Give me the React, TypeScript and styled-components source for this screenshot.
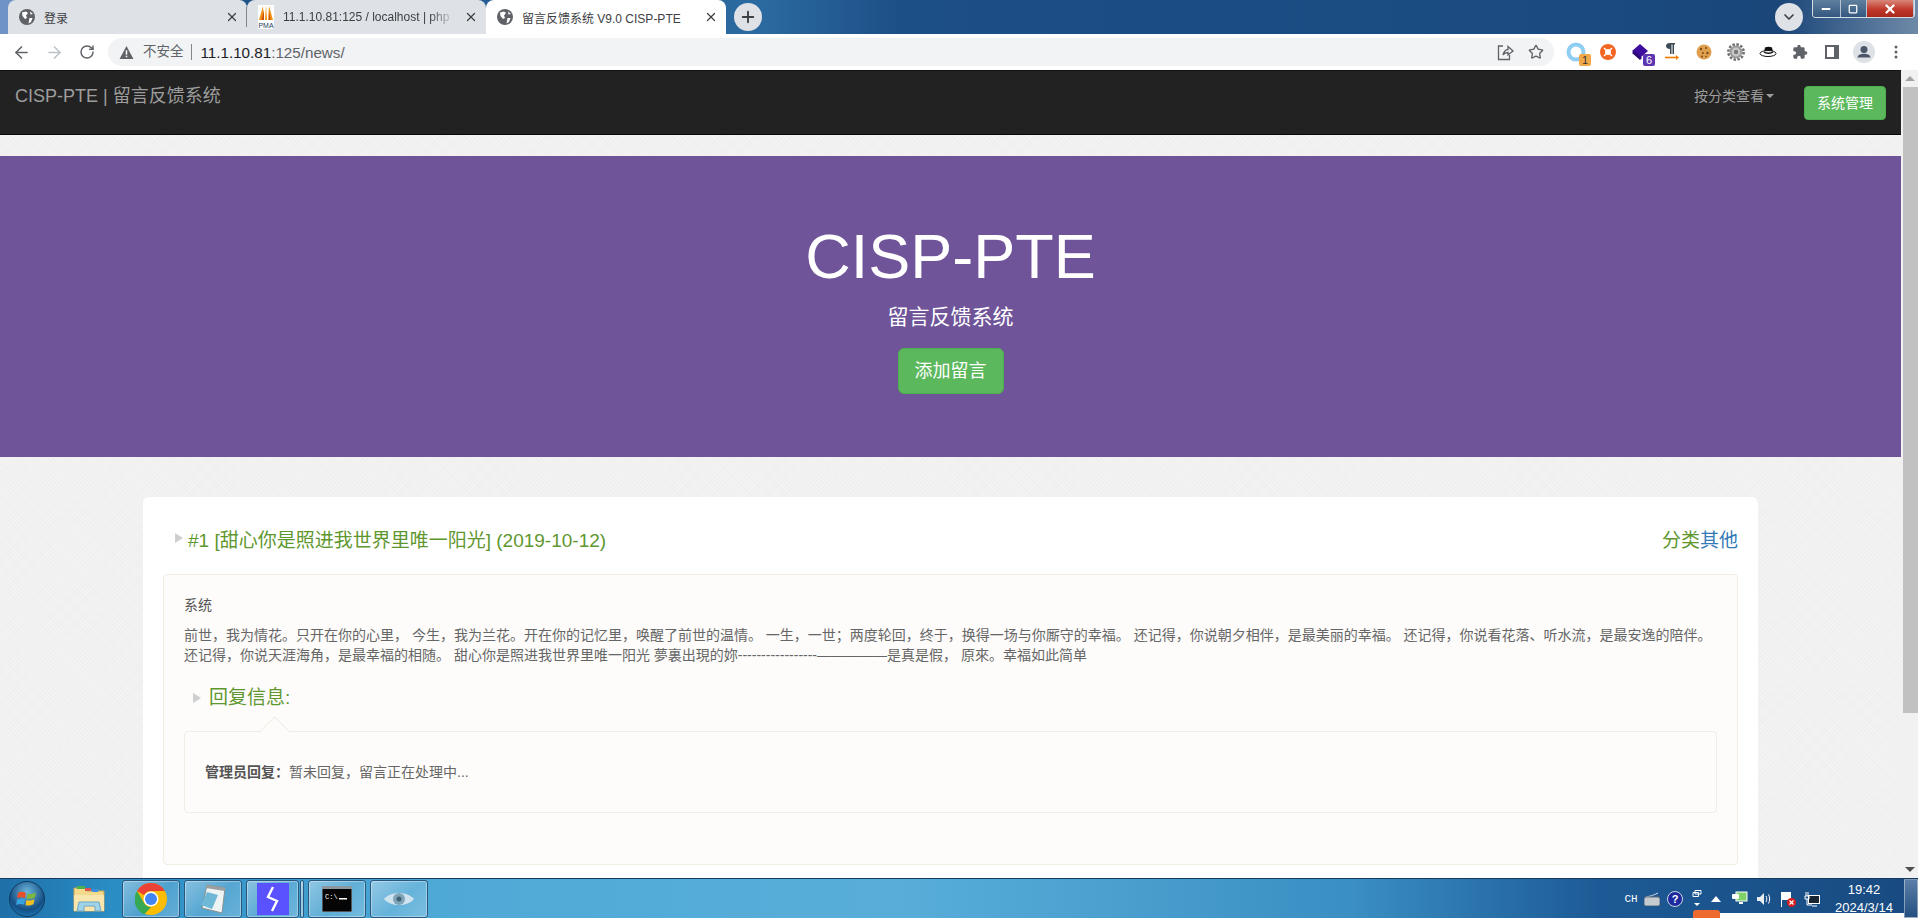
import React, { ReactElement } from 'react';
import styled, { createGlobalStyle } from 'styled-components';
import { ArrowLeft, ArrowRight, ChevronDown, Minus, Plus, RotateCw, Star, Square, X } from 'lucide-react';

const GlobalStyle = createGlobalStyle`
  html, body {
    margin: 0;
    padding: 0;
    height: 100%;
    overflow: hidden;
  }
  body {
    font-family: 'Liberation Sans', 'Noto Sans CJK SC', sans-serif;
    font-size: 14px;
    color: #333;
  }
  * {
    box-sizing: border-box;
  }
`;

const Page = styled.div`
  width: 1918px;
  height: 918px;
  display: flex;
  flex-direction: column;
  overflow: hidden;
`;

/* ---- browser chrome ---- */
const TabStrip = styled.div`
  height: 34px;
  flex: none;
  display: flex;
  align-items: stretch;
  padding-left: 8px;
  background: linear-gradient(90deg, #6f93c4 0, #6f93c4 8px, #1e5388 250px, #2b6aa0 760px, #1c4f86 900px, #1a4a80 1600px, #1a4679 1780px, #6f8aa8 1918px);
`;
const Tab = styled.div<{ $active?: boolean; $width: number }>`
  width: ${(p) => p.$width}px;
  display: flex;
  align-items: center;
  padding: 0 8px 0 11px;
  gap: 9px;
  font-size: 12px;
  color: #45474b;
  white-space: nowrap;
  border-radius: 8px 8px 0 0;
  background: ${(p) => (p.$active ? '#fff' : '#dee1e6')};
`;
const TabTitle = styled.span<{ $fade?: boolean }>`
  flex: 1;
  overflow: hidden;
  color: #3c4043;
  ${(p) => p.$fade && 'mask-image: linear-gradient(90deg, #000 85%, transparent);'}
`;
const TabClose = styled(X)`
  flex: none;
  color: #3c4043;
`;
const TabSeparator = styled.div`
  width: 1px;
  background: #80868b;
  margin: 7px 0;
  position: relative;
  z-index: 1;
  margin-left: -1px;
`;
const NewTab = styled.div`
  width: 28px;
  height: 28px;
  margin: 3px 0 0 8px;
  border-radius: 50%;
  background: #dee1e6;
  display: flex;
  align-items: center;
  justify-content: center;
  color: #3c4043;
`;
const StripFill = styled.div`
  flex: 1;
`;
const TabSearch = styled.div`
  width: 28px;
  height: 28px;
  margin: 3px 9px 0 0;
  border-radius: 50%;
  background: #dee1e6;
  display: flex;
  align-items: center;
  justify-content: center;
  color: #3c4043;
`;
const WindowControls = styled.div`
  width: 103px;
  height: 18px;
  margin-right: 3px;
  display: flex;
  border: 1px solid #d5dde6;
  border-top: 0;
  border-radius: 0 0 4px 4px;
  overflow: hidden;
`;
const WindowButton = styled.div<{ $close?: boolean; $grow?: number }>`
  flex: ${(p) => p.$grow ?? 1};
  display: flex;
  align-items: center;
  justify-content: center;
  color: #fff;
  border-right: 1px solid #b6c4d3;
  background: ${(p) => (p.$close ? 'linear-gradient(#d9877a, #c0392b 55%, #a8281c)' : 'linear-gradient(#5f7f9e, #33587f)')};
`;

const Toolbar = styled.div`
  height: 36px;
  flex: none;
  display: flex;
  align-items: center;
  background: #fff;
  padding: 0 6px 0 6px;
`;
const NavButton = styled.div<{ $width: number; $off?: boolean }>`
  width: ${(p) => p.$width}px;
  display: flex;
  justify-content: center;
  color: ${(p) => (p.$off ? '#bdc1c6' : '#5f6368')};
`;
const Omnibox = styled.div`
  flex: 1;
  height: 28px;
  margin: 0 6px 0 6px;
  padding: 0 10px 0 11px;
  display: flex;
  align-items: center;
  border-radius: 14px;
  background: #f1f3f4;
  font-size: 13px;
  color: #5f6368;
`;
const NotSecure = styled.span`
  margin-left: 9px;
  font-size: 13.5px;
  padding-right: 7px;
  border-right: 1px solid #80868b;
  line-height: 16px;
`;
const Url = styled.span`
  margin-left: 9px;
  font-size: 15.2px;
  color: #5f6368;
  flex: 1;
  b {
    font-weight: normal;
    color: #202124;
  }
`;
const OmniIcon = styled.span<{ $gap: number }>`
  display: flex;
  margin-left: ${(p) => p.$gap}px;
  color: #5f6368;
`;
const Extensions = styled.div`
  display: flex;
`;
const Extension = styled.div`
  width: 32px;
  height: 28px;
  display: flex;
  align-items: center;
  justify-content: center;
  position: relative;
`;
const ExtBadge = styled.span<{ $bg: string; $color: string }>`
  position: absolute;
  right: 1px;
  bottom: 0;
  width: 12px;
  height: 12px;
  border-radius: 2px;
  font-size: 11px;
  line-height: 12px;
  text-align: center;
  background: ${(p) => p.$bg};
  color: ${(p) => p.$color};
`;

/* ---- page area ---- */
const Body = styled.div`
  flex: 1;
  min-height: 0;
  display: flex;
`;
const Viewport = styled.div`
  flex: 1;
  min-width: 0;
  overflow: hidden;
  background-color: #f3f3f3;
  background-image: repeating-linear-gradient(45deg, rgba(0, 0, 0, 0.012) 0 1px, transparent 1px 3px),
    repeating-linear-gradient(-45deg, rgba(0, 0, 0, 0.012) 0 1px, transparent 1px 3px);
`;
const Navbar = styled.nav`
  height: 65px;
  display: flex;
  align-items: flex-start;
  padding: 0 15px;
  background: #222;
  border-top: 1px solid #111;
  border-bottom: 1px solid #080808;
`;
const Brand = styled.a`
  font-size: 18px;
  line-height: 50px;
  color: #9d9d9d;
`;
const NavRight = styled.div`
  margin-left: auto;
  display: flex;
  align-items: flex-start;
`;
const NavLink = styled.a`
  display: flex;
  align-items: center;
  font-size: 14px;
  line-height: 50px;
  color: #9d9d9d;
  margin-right: 30px;
`;
const Caret = styled.span`
  width: 0;
  height: 0;
  margin-left: 2px;
  border-top: 4px solid #9d9d9d;
  border-left: 4px solid transparent;
  border-right: 4px solid transparent;
`;
const GreenButton = styled.a<{ $large?: boolean }>`
  display: inline-block;
  color: #fff;
  background: #5cb85c;
  border: 1px solid #4cae4c;
  border-radius: ${(p) => (p.$large ? 6 : 4)}px;
  font-size: ${(p) => (p.$large ? 18 : 14)}px;
  line-height: ${(p) => (p.$large ? 28 : 20)}px;
  padding: ${(p) => (p.$large ? '8px 16px' : '6px 12px')};
`;
const NavButtonGreen = styled(GreenButton)`
  margin-top: 15px;
  font-weight: 400;
`;
const Hero = styled.section`
  margin-top: 21px;
  height: 301px;
  padding-top: 60px;
  background: #6f5499;
  color: #fff;
  text-align: center;
`;
const HeroTitle = styled.h1`
  margin: 0;
  font-size: 63px;
  font-weight: 400;
  line-height: 80px;
`;
const HeroSubtitle = styled.p`
  margin: 0 0 10px;
  font-size: 21px;
  line-height: 42px;
`;

const Card = styled.article`
  margin: 40px 143px 0;
  padding: 22px 20px 0;
  height: 400px;
  background: #fff;
  border-radius: 6px 6px 0 0;
`;
const CardHead = styled.div`
  display: flex;
  align-items: center;
  justify-content: space-between;
  height: 38px;
  margin-bottom: 17px;
  font-size: 19px;
`;
const Heading = styled.h3<{ $indent: number; $gap: number }>`
  margin: 0;
  display: flex;
  align-items: center;
  gap: ${(p) => p.$gap}px;
  padding-left: ${(p) => p.$indent}px;
  font-size: 19px;
  font-weight: 400;
  color: #5f972f;
`;
const Arrow = styled.span`
  width: 0;
  height: 0;
  border-left: 8px solid #cfcfcf;
  border-top: 5px solid transparent;
  border-bottom: 5px solid transparent;
`;
const Category = styled.span`
  color: #5f972f;
  a {
    color: #337ab7;
  }
`;
const Inner = styled.div`
  height: 291px;
  padding: 20px 20px 0;
  background: #fdfcfa;
  border: 1px solid #f1ece4;
  border-radius: 4px;
  font-size: 14px;
  color: #666;
  line-height: 20px;
`;
const Author = styled.div`
  color: #555;
  margin-bottom: 10px;
`;
const Paragraph = styled.p`
  margin: 0;
  white-space: nowrap;
`;
const ReplyHead = styled(Heading)`
  margin-top: 20px;
  height: 26px;
`;
const ReplyBox = styled.div`
  position: relative;
  margin-top: 20px;
  height: 82px;
  padding: 30px 20px;
  background: #fdfcfa;
  border: 1px solid #f1ece4;
  border-radius: 4px;
  &::before {
    content: '';
    position: absolute;
    left: 78px;
    top: -11px;
    width: 22px;
    height: 22px;
    transform: rotate(45deg);
    background: #fdfcfa;
    border-left: 1px solid #f1ece4;
    border-top: 1px solid #f1ece4;
  }
  strong {
    color: #555;
  }
`;
const Scrollbar = styled.div`
  width: 17px;
  flex: none;
  display: flex;
  flex-direction: column;
  align-items: stretch;
  background: #f1f1f1;
`;
const ScrollEnd = styled.div`
  height: 17px;
  flex: none;
  display: flex;
  align-items: center;
  justify-content: center;
`;
const ScrollThumb = styled.div`
  height: 626px;
  margin-left: 2px;
  background: #c1c1c1;
`;
const ScrollGap = styled.div`
  flex: 1;
`;
const ScrollArrow = styled.span<{ $down?: boolean }>`
  width: 0;
  height: 0;
  border-left: 5px solid transparent;
  border-right: 5px solid transparent;
  ${(p) => (p.$down ? 'border-top: 5px solid #505050;' : 'border-bottom: 5px solid #a3a3a3;')}
`;

/* ---- windows taskbar ---- */
const Taskbar = styled.div`
  height: 40px;
  flex: none;
  display: flex;
  align-items: center;
  position: relative;
  border-top: 1px solid #15395f;
  color: #fff;
  background: linear-gradient(90deg, #1f6fa8 0, #2a8dc4 110px, #4fa9d6 440px, #58aed9 900px, #3a8fc3 1350px, #1d5a95 1600px, #184a80 1918px);
`;
const StartOrb = styled.div`
  width: 36px;
  height: 36px;
  margin: 0 15px 0 9px;
  border-radius: 50%;
  border: 1px solid #123a5c;
  display: flex;
  align-items: center;
  justify-content: center;
  background: radial-gradient(circle at 50% 30%, #6db7dc, #154f86 60%, #1f8fd0);
`;
const PinnedSlot = styled.div`
  width: 58px;
  height: 38px;
  margin-right: 4px;
  display: flex;
  align-items: center;
  justify-content: center;
`;
const TaskButton = styled.div<{ $width?: number; $gap?: number }>`
  width: ${(p) => p.$width ?? 58}px;
  height: 38px;
  margin-right: ${(p) => p.$gap ?? 4}px;
  display: flex;
  align-items: center;
  justify-content: center;
  border: 1px solid #28587e;
  border-radius: 3px;
  box-shadow: inset 0 0 0 1px rgba(255, 255, 255, 0.35);
  background: linear-gradient(135deg, rgba(255, 255, 255, 0.42), rgba(255, 255, 255, 0.15) 55%, rgba(255, 255, 255, 0.25));
`;
const Tray = styled.div`
  margin-left: auto;
  display: flex;
  align-items: center;
  height: 100%;
`;
const TrayItem = styled.div<{ $width: number }>`
  width: ${(p) => p.$width}px;
  display: flex;
  justify-content: center;
  align-items: center;
  font-family: 'Liberation Mono', monospace;
  font-size: 11px;
  svg {
    flex: none;
  }
`;
const Clock = styled.div`
  width: 80px;
  text-align: center;
  font-size: 13px;
  line-height: 18px;
`;
const ShowDesktop = styled.div`
  width: 14px;
  height: 100%;
  border: 1px solid rgba(255, 255, 255, 0.4);
  background: linear-gradient(#5a7ea6, #244f80);
`;
const TrayOverlay = styled.div`
  position: absolute;
  left: 1693px;
  right: 14px;
  bottom: 0;
  height: 5px;
  background: #fff;
`;
const OrangeChip = styled.div`
  position: absolute;
  left: 1693px;
  bottom: 0;
  width: 27px;
  height: 8px;
  background: #ee6a2e;
  border-radius: 3px 3px 0 0;
`;

function Globe(): ReactElement {
  return (
    <svg width="16" height="16" viewBox="0 0 16 16" style={{ flex: 'none' }}>
      <circle cx="8" cy="8" r="8" fill="#5f6368" />
      <path d="M3 3.5 7 2.5 9 4 7 6.5 8 9 6 10 3.5 7ZM10.5 9 13.5 9 12 13 9.5 14.5Z M11 2.5 14 5 11.5 5.5Z" fill="#fff" />
    </svg>
  );
}

function PmaIcon(): ReactElement {
  return (
    <svg width="16" height="24" viewBox="0 0 16 24" style={{ flex: 'none' }}>
      <rect width="16" height="24" fill="#fff" />
      <path d="M1 15 5 1 6 15ZM7 15 8 0 9 15ZM10 15 11 1 15 15Z" fill="#f29111" />
      <path d="M3.5 15 6 5 6 15ZM12.5 15 11 6 11 15Z" fill="#c8500f" />
      <text x="8" y="22.5" fontSize="7" textAnchor="middle" fill="#23415f" fontFamily="Liberation Sans">PMA</text>
    </svg>
  );
}

function Warning(): ReactElement {
  return (
    <svg width="15" height="15" viewBox="0 0 14 14" style={{ flex: 'none' }}>
      <path d="M7 1 13.5 13H.5Z" fill="#5f6368" />
      <rect x="6.3" y="5" width="1.4" height="4" fill="#fff" />
      <rect x="6.3" y="10" width="1.4" height="1.4" fill="#fff" />
    </svg>
  );
}

function ShareIcon(): ReactElement {
  return (
    <svg width="17" height="17" viewBox="0 0 17 17" fill="none" stroke="#5f6368" strokeWidth="1.3">
      <path d="M6 2H1.5V15.5H12.5V11" />
      <path d="M6 11C6.5 7.5 9 5.5 11 5.5V2.5L16 7 11 11V8.5C9 8.5 7 9.5 6 11Z" />
    </svg>
  );
}

function RingExt(): ReactElement {
  return (
    <svg width="20" height="20" viewBox="0 0 20 20" fill="none">
      <circle cx="10" cy="10" r="7.5" stroke="#8fcdf3" strokeWidth="4" />
    </svg>
  );
}

function LifeRing(): ReactElement {
  return (
    <svg width="16" height="16" viewBox="0 0 16 16" fill="none">
      <circle cx="8" cy="8" r="5.5" stroke="#f26522" strokeWidth="5" />
      <path d="M4 4 6 6M12 4 10 6M4 12 6 10M12 12 10 10" stroke="#fff" strokeWidth="1.4" />
    </svg>
  );
}

function Diamond(): ReactElement {
  return (
    <svg width="20" height="20" viewBox="0 0 20 20">
      <path d="M10 2 18 9 10 16 2 9Z" fill="#3d0d9e" />
      <path d="M2 11 10 18 12 16 4 9Z" fill="#2b0a73" />
    </svg>
  );
}

function Pilcrow(): ReactElement {
  return (
    <svg width="16" height="20" viewBox="0 0 16 20">
      <path d="M6 12V7C3 7 2 5.5 2 4S3 1 6 1H11V2.5H10V12H8.5V2.5H7.5V12Z" fill="#3c4a55" />
      <path d="M1 15.5H13" stroke="#f57c00" strokeWidth="1.6" />
      <path d="M12 13 15 15.5 12 18Z" fill="#f57c00" />
    </svg>
  );
}

function Cookie(): ReactElement {
  return (
    <svg width="16" height="16" viewBox="0 0 16 16">
      <circle cx="8" cy="8" r="7.5" fill="#dfa04e" />
      <circle cx="5" cy="5" r="1.2" fill="#7a4a1c" />
      <circle cx="10" cy="4" r="1" fill="#7a4a1c" />
      <circle cx="11.5" cy="9" r="1.2" fill="#7a4a1c" />
      <circle cx="7" cy="9" r="1" fill="#7a4a1c" />
      <circle cx="6" cy="12.5" r="1" fill="#7a4a1c" />
      <circle cx="10" cy="12.5" r="0.8" fill="#7a4a1c" />
    </svg>
  );
}

function Gear(): ReactElement {
  return (
    <svg width="18" height="18" viewBox="0 0 18 18">
      <circle cx="9" cy="9" r="7.6" fill="none" stroke="#6f6f6f" strokeWidth="2.6" strokeDasharray="2.4 1.6" />
      <circle cx="9" cy="9" r="6.4" fill="#9a9a9a" />
      <circle cx="9" cy="9" r="4.4" fill="#c9c9c9" />
      <circle cx="9" cy="9" r="2.2" fill="#7a7a7a" />
    </svg>
  );
}

function Hat(): ReactElement {
  return (
    <svg width="18" height="14" viewBox="0 0 18 14">
      <path d="M5 7 6 2.5C8 1.5 11 1.5 13 2.5L14 7Z" fill="#111" />
      <ellipse cx="9" cy="8.5" rx="8" ry="3" fill="#fff" stroke="#111" />
      <path d="M5 7C7 8.5 12 8.5 14 7" stroke="#111" fill="none" strokeWidth="1.5" />
    </svg>
  );
}

function Puzzle(): ReactElement {
  return (
    <svg width="16" height="16" viewBox="0 0 24 24" fill="#5f6368">
      <path d="M20.5 11H19V7a2 2 0 0 0-2-2h-4V3.5a2.5 2.5 0 0 0-5 0V5H4a2 2 0 0 0-2 2v3.8h1.5a2.7 2.7 0 0 1 0 5.4H2V20a2 2 0 0 0 2 2h3.8v-1.5a2.7 2.7 0 0 1 5.4 0V22H17a2 2 0 0 0 2-2v-4h1.5a2.5 2.5 0 0 0 0-5Z" />
    </svg>
  );
}

function SidePanel(): ReactElement {
  return (
    <svg width="14" height="14" viewBox="0 0 14 14">
      <path d="M0 0H14V14H0ZM2 2V12H9V2Z" fill="#5f6368" fillRule="evenodd" />
    </svg>
  );
}

function Avatar(): ReactElement {
  return (
    <svg width="22" height="22" viewBox="0 0 22 22">
      <circle cx="11" cy="11" r="11" fill="#dee1e6" />
      <circle cx="11" cy="8.5" r="3.5" fill="#4a5568" />
      <path d="M4.5 16.5C5 13.5 8 12.8 11 12.8S17 13.5 17.5 16.5Z" fill="#4a5568" />
    </svg>
  );
}

function Dots(): ReactElement {
  return (
    <svg width="4" height="14" viewBox="0 0 4 14" fill="#5f6368">
      <circle cx="2" cy="2" r="1.5" />
      <circle cx="2" cy="7" r="1.5" />
      <circle cx="2" cy="12" r="1.5" />
    </svg>
  );
}

function WindowsLogo(): ReactElement {
  return (
    <svg width="22" height="20" viewBox="0 0 22 20">
      <path d="M2 4C5 2 7 3 10 4L9 9C6 8 4 8 1 9Z" fill="#e8502a" />
      <path d="M11.5 4.5C14 5.5 17 5 20 3.5L19 8.5C16 10 14 10 10.5 9.5Z" fill="#7cb83c" />
      <path d="M1 10.5C4 9.5 6 9.5 9 10.5L8 15.5C5 14.5 3 15 0 16Z" fill="#36a3e0" />
      <path d="M10.5 11C13.5 12 16 11.5 18.5 10L17.5 15C15 16.5 12.5 17 9.5 16Z" fill="#f4c020" />
    </svg>
  );
}

function Folder(): ReactElement {
  return (
    <svg width="32" height="28" viewBox="0 0 32 28">
      <path d="M1 3H12L14 6H31V26H1Z" fill="#f3d98a" stroke="#c8a659" />
      <rect x="4" y="1" width="8" height="3" fill="#4caf50" />
      <rect x="12" y="3" width="6" height="3" fill="#d9534f" />
      <rect x="19" y="4" width="6" height="3" fill="#3b8fe0" />
      <path d="M1 10H31V26H1Z" fill="#f8e6ae" />
      <path d="M6 17H26L28 26H22V21H11V26H4Z" fill="#9fd4ea" stroke="#6aa6c2" />
    </svg>
  );
}

function ChromeLogo(): ReactElement {
  return (
    <svg width="32" height="32" viewBox="0 0 32 32">
      <circle cx="16" cy="16" r="16" fill="#fbbc04" />
      <path d="M16 0A16 16 0 0 1 29.9 8H16A8 8 0 0 0 9 12L2.1 8A16 16 0 0 1 16 0Z" fill="#ea4335" />
      <path d="M2.1 8 9 20A8 8 0 0 0 16 24L9.1 31.4A16 16 0 0 1 2.1 8Z" fill="#34a853" />
      <circle cx="16" cy="16" r="7.5" fill="#fff" />
      <circle cx="16" cy="16" r="6" fill="#4285f4" />
    </svg>
  );
}

function Notepad(): ReactElement {
  return (
    <svg width="30" height="32" viewBox="0 0 30 32">
      <path d="M9 2 27 5 24 30 4 25Z" fill="#eef3f3" stroke="#8a8f8f" />
      <path d="M9 2 27 5 26.5 8 8 5Z" fill="#9aa0a0" />
      <path d="M9 9 3 22 14 26 20 12Z" fill="#6db8d6" />
    </svg>
  );
}

function BoltApp(): ReactElement {
  return (
    <svg width="32" height="32" viewBox="0 0 32 32">
      <rect width="32" height="32" fill="#5a51ff" />
      <path d="M16 4 11 14 20 18 15 28" fill="none" stroke="#fff" strokeWidth="2.4" />
    </svg>
  );
}

function Terminal(): ReactElement {
  return (
    <svg width="30" height="26" viewBox="0 0 30 26">
      <rect width="30" height="26" fill="#050505" stroke="#9aa5ad" />
      <rect y="0" width="30" height="3" fill="#8b98a2" />
      <text x="3" y="13" fontSize="7" fill="#fff" fontFamily="Liberation Mono">C:\</text>
      <rect x="17" y="12" width="8" height="1.5" fill="#fff" />
    </svg>
  );
}

function Eye(): ReactElement {
  return (
    <svg width="32" height="18" viewBox="0 0 32 18">
      <path d="M1 9C8 1 24 1 31 9 24 17 8 17 1 9Z" fill="#cfe3ee" />
      <circle cx="16" cy="9" r="6" fill="#7fa4b8" />
      <circle cx="16" cy="9" r="2.5" fill="#3f5f72" />
    </svg>
  );
}

function TrayKeyboard(): ReactElement {
  return (
    <svg width="16" height="14" viewBox="0 0 16 14">
      <path d="M2 5C6 4 8 4 14 1" stroke="#d8dee3" fill="none" />
      <rect y="5" width="16" height="9" rx="2" fill="#c4ccd2" stroke="#5d6a74" />
    </svg>
  );
}

function TrayHelp(): ReactElement {
  return (
    <svg width="16" height="16" viewBox="0 0 16 16">
      <circle cx="8" cy="8" r="7.5" fill="#1d2a9d" stroke="#cfd6e6" />
      <text x="8" y="12" fontSize="11" fontWeight="700" textAnchor="middle" fill="#fff" fontFamily="Liberation Sans">?</text>
    </svg>
  );
}

function TrayMini(): ReactElement {
  return (
    <svg width="10" height="20" viewBox="0 0 10 20" fill="none">
      <path d="M3 1.5H9V5H3ZM1 3.5H6.5V7.5H1Z" stroke="#fff" />
      <path d="M2 14H8L5 17Z" fill="#fff" />
    </svg>
  );
}

function TrayUp(): ReactElement {
  return (
    <svg width="10" height="6" viewBox="0 0 10 6">
      <path d="M0 6 5 0 10 6Z" fill="#fff" />
    </svg>
  );
}

function TrayMonitor(): ReactElement {
  return (
    <svg width="16" height="15" viewBox="0 0 16 15">
      <rect x="4" y="1" width="11" height="9" fill="#7fd36a" stroke="#fff" />
      <rect y="3" width="7" height="5" rx="1" fill="#fff" />
      <rect x="7" y="11" width="4" height="2" fill="#fff" />
    </svg>
  );
}

function TrayVolume(): ReactElement {
  return (
    <svg width="16" height="16" viewBox="0 0 16 16" fill="none">
      <path d="M1 6H4L8 2V14L4 10H1Z" fill="#e8edf2" />
      <path d="M10 5C11 7 11 9 10 11M12.5 3.5C14 6 14 10 12.5 12.5" stroke="#fff" />
    </svg>
  );
}

function TrayFlag(): ReactElement {
  return (
    <svg width="16" height="16" viewBox="0 0 16 16">
      <path d="M1 1H2V16H1Z" fill="#fff" />
      <path d="M2 1H11V9H2Z" fill="#fff" />
      <circle cx="11.5" cy="11.5" r="4.5" fill="#d81e1e" />
      <path d="M9.5 9.5 13.5 13.5M13.5 9.5 9.5 13.5" stroke="#fff" strokeWidth="1.2" />
    </svg>
  );
}

function TrayNetwork(): ReactElement {
  return (
    <svg width="16" height="16" viewBox="0 0 16 16" fill="none">
      <rect x="4.5" y="4.5" width="11" height="8" stroke="#fff" fill="#1a2533" />
      <path d="M8 15H13" stroke="#fff" />
      <path d="M2 1V5M4 1V5M1 5H5V8H1ZM3 8V14H8" stroke="#fff" />
    </svg>
  );
}

const TITLE = '留言反馈系统';

function BrowserChrome(): ReactElement {
  return (
    <>
      <TabStrip>
        <Tab $width={239}>
          <Globe />
          <TabTitle>登录</TabTitle>
          <TabClose size={14} strokeWidth={2.2} />
        </Tab>
        <TabSeparator />
        <Tab $width={239}>
          <PmaIcon />
          <TabTitle $fade>11.1.10.81:125 / localhost | php</TabTitle>
          <TabClose size={14} strokeWidth={2.2} />
        </Tab>
        <Tab $width={240} $active>
          <Globe />
          <TabTitle>{TITLE} V9.0 CISP-PTE</TabTitle>
          <TabClose size={14} strokeWidth={2.2} />
        </Tab>
        <NewTab>
          <Plus size={18} strokeWidth={2.5} />
        </NewTab>
        <StripFill />
        <TabSearch>
          <ChevronDown size={16} strokeWidth={2.5} />
        </TabSearch>
        <WindowControls>
          <WindowButton $grow={28}>
            <Minus size={12} strokeWidth={4} />
          </WindowButton>
          <WindowButton $grow={26}>
            <Square size={10} strokeWidth={3} />
          </WindowButton>
          <WindowButton $grow={48} $close>
            <X size={14} strokeWidth={4} />
          </WindowButton>
        </WindowControls>
      </TabStrip>
      <Toolbar>
        <NavButton $width={30}>
          <ArrowLeft size={19} strokeWidth={2} />
        </NavButton>
        <NavButton $width={36} $off>
          <ArrowRight size={19} strokeWidth={2} />
        </NavButton>
        <NavButton $width={30}>
          <RotateCw size={16} strokeWidth={2.2} />
        </NavButton>
        <Omnibox>
          <Warning />
          <NotSecure>不安全</NotSecure>
          <Url>
            <b>11.1.10.81</b>:125/news/
          </Url>
          <OmniIcon $gap={12}>
            <ShareIcon />
          </OmniIcon>
          <OmniIcon $gap={14}>
            <Star size={16} strokeWidth={2} />
          </OmniIcon>
        </Omnibox>
        <Extensions>
          <Extension>
            <RingExt />
            <ExtBadge $bg="#f0a94a" $color="#333">1</ExtBadge>
          </Extension>
          <Extension>
            <LifeRing />
          </Extension>
          <Extension>
            <Diamond />
            <ExtBadge $bg="#5e35b1" $color="#fff">6</ExtBadge>
          </Extension>
          <Extension>
            <Pilcrow />
          </Extension>
          <Extension>
            <Cookie />
          </Extension>
          <Extension>
            <Gear />
          </Extension>
          <Extension>
            <Hat />
          </Extension>
          <Extension>
            <Puzzle />
          </Extension>
          <Extension>
            <SidePanel />
          </Extension>
          <Extension>
            <Avatar />
          </Extension>
          <Extension>
            <Dots />
          </Extension>
        </Extensions>
      </Toolbar>
    </>
  );
}

function MessageCard(): ReactElement {
  return (
    <Card>
      <CardHead>
        <Heading $indent={12} $gap={5}>
          <Arrow />
          #1 [甜心你是照进我世界里唯一阳光] (2019-10-12)
        </Heading>
        <Category>
          分类<a>其他</a>
        </Category>
      </CardHead>
      <Inner>
        <Author>系统</Author>
        <Paragraph>
          前世，我为情花。只开在你的心里， 今生，我为兰花。开在你的记忆里，唤醒了前世的温情。 一生，一世；两度轮回，终于，换得一场与你厮守的幸福。 还记得，你说朝夕相伴，是最美丽的幸福。 还记得，你说看花落、听水流，是最安逸的陪伴。
          <br />
          还记得，你说天涯海角，是最幸福的相随。 甜心你是照进我世界里唯一阳光 夢裏出現的妳-----------------—————是真是假， 原來。幸福如此简单
        </Paragraph>
        <ReplyHead $indent={9} $gap={8}>
          <Arrow />
          回复信息:
        </ReplyHead>
        <ReplyBox>
          <strong>管理员回复：</strong>暂未回复，留言正在处理中...
        </ReplyBox>
      </Inner>
    </Card>
  );
}

function WindowsTaskbar(): ReactElement {
  return (
    <Taskbar>
      <StartOrb>
        <WindowsLogo />
      </StartOrb>
      <PinnedSlot>
        <Folder />
      </PinnedSlot>
      <TaskButton>
        <ChromeLogo />
      </TaskButton>
      <TaskButton>
        <Notepad />
      </TaskButton>
      <TaskButton $width={53} $gap={1}>
        <BoltApp />
      </TaskButton>
      <TaskButton $width={4} />
      <TaskButton>
        <Terminal />
      </TaskButton>
      <TaskButton>
        <Eye />
      </TaskButton>
      <Tray>
        <TrayItem $width={26}>CH</TrayItem>
        <TrayItem $width={16}>
          <TrayKeyboard />
        </TrayItem>
        <TrayItem $width={30}>
          <TrayHelp />
        </TrayItem>
        <TrayItem $width={14}>
          <TrayMini />
        </TrayItem>
        <TrayItem $width={24}>
          <TrayUp />
        </TrayItem>
        <TrayItem $width={24}>
          <TrayMonitor />
        </TrayItem>
        <TrayItem $width={24}>
          <TrayVolume />
        </TrayItem>
        <TrayItem $width={24}>
          <TrayFlag />
        </TrayItem>
        <TrayItem $width={24}>
          <TrayNetwork />
        </TrayItem>
        <Clock>
          19:42
          <br />
          2024/3/14
        </Clock>
        <ShowDesktop />
      </Tray>
      <TrayOverlay />
      <OrangeChip />
    </Taskbar>
  );
}

export default function App(): ReactElement {
  return (
    <Page>
      <GlobalStyle />
      <BrowserChrome />
      <Body>
        <Viewport>
          <Navbar>
            <Brand>CISP-PTE | {TITLE}</Brand>
            <NavRight>
              <NavLink>
                按分类查看
                <Caret />
              </NavLink>
              <NavButtonGreen>系统管理</NavButtonGreen>
            </NavRight>
          </Navbar>
          <Hero>
            <HeroTitle>CISP-PTE</HeroTitle>
            <HeroSubtitle>{TITLE}</HeroSubtitle>
            <GreenButton $large>添加留言</GreenButton>
          </Hero>
          <MessageCard />
        </Viewport>
        <Scrollbar>
          <ScrollEnd>
            <ScrollArrow />
          </ScrollEnd>
          <ScrollThumb />
          <ScrollGap />
          <ScrollEnd>
            <ScrollArrow $down />
          </ScrollEnd>
        </Scrollbar>
      </Body>
      <WindowsTaskbar />
    </Page>
  );
}
